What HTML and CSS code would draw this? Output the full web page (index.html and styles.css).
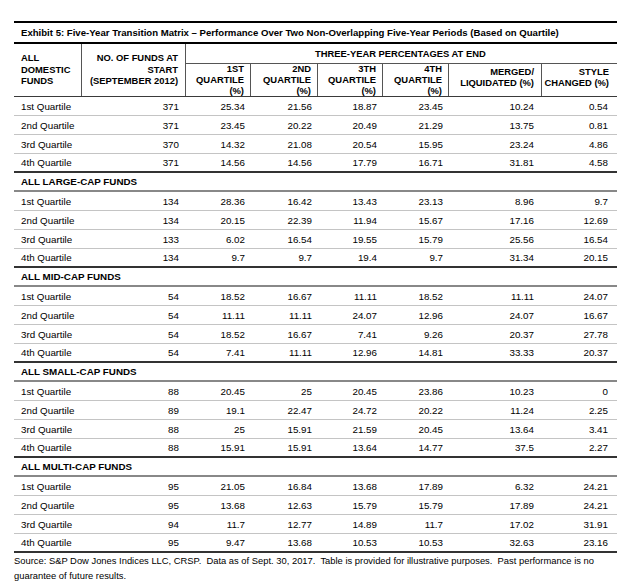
FILE: index.html
```html
<!DOCTYPE html>
<html lang="en">
<head>
<meta charset="utf-8">
<title>Exhibit 5: Five-Year Transition Matrix</title>
<link rel="stylesheet" href="styles.css">
</head>
<body>
<div class="exhibit">
  <div class="title">Exhibit 5: Five-Year Transition Matrix – Performance Over Two Non-Overlapping Five-Year Periods (Based on Quartile)</div>
  <div class="head">
    <div class="h-group">ALL<br>DOMESTIC<br>FUNDS</div>
    <div class="h-count">NO. OF FUNDS AT<br>START<br>(SEPTEMBER 2012)</div>
    <div class="h-span">THREE-YEAR PERCENTAGES AT END</div>
    <div class="h-sub">1ST<br>QUARTILE<br>(%)</div>
    <div class="h-sub">2ND<br>QUARTILE<br>(%)</div>
    <div class="h-sub">3TH<br>QUARTILE<br>(%)</div>
    <div class="h-sub">4TH<br>QUARTILE<br>(%)</div>
    <div class="h-sub h-two">MERGED/<br>LIQUIDATED (%)</div>
    <div class="h-sub h-two h-last">STYLE<br>CHANGED (%)</div>
  </div>

  <div class="row"><span class="lbl">1st Quartile</span><span>371</span><span>25.34</span><span>21.56</span><span>18.87</span><span>23.45</span><span>10.24</span><span>0.54</span></div>
  <div class="row"><span class="lbl">2nd Quartile</span><span>371</span><span>23.45</span><span>20.22</span><span>20.49</span><span>21.29</span><span>13.75</span><span>0.81</span></div>
  <div class="row"><span class="lbl">3rd Quartile</span><span>370</span><span>14.32</span><span>21.08</span><span>20.54</span><span>15.95</span><span>23.24</span><span>4.86</span></div>
  <div class="row end"><span class="lbl">4th Quartile</span><span>371</span><span>14.56</span><span>14.56</span><span>17.79</span><span>16.71</span><span>31.81</span><span>4.58</span></div>

  <div class="row section"><span class="lbl">ALL LARGE-CAP FUNDS</span></div>
  <div class="row"><span class="lbl">1st Quartile</span><span>134</span><span>28.36</span><span>16.42</span><span>13.43</span><span>23.13</span><span>8.96</span><span>9.7</span></div>
  <div class="row"><span class="lbl">2nd Quartile</span><span>134</span><span>20.15</span><span>22.39</span><span>11.94</span><span>15.67</span><span>17.16</span><span>12.69</span></div>
  <div class="row"><span class="lbl">3rd Quartile</span><span>133</span><span>6.02</span><span>16.54</span><span>19.55</span><span>15.79</span><span>25.56</span><span>16.54</span></div>
  <div class="row end"><span class="lbl">4th Quartile</span><span>134</span><span>9.7</span><span>9.7</span><span>19.4</span><span>9.7</span><span>31.34</span><span>20.15</span></div>

  <div class="row section"><span class="lbl">ALL MID-CAP FUNDS</span></div>
  <div class="row"><span class="lbl">1st Quartile</span><span>54</span><span>18.52</span><span>16.67</span><span>11.11</span><span>18.52</span><span>11.11</span><span>24.07</span></div>
  <div class="row"><span class="lbl">2nd Quartile</span><span>54</span><span>11.11</span><span>11.11</span><span>24.07</span><span>12.96</span><span>24.07</span><span>16.67</span></div>
  <div class="row"><span class="lbl">3rd Quartile</span><span>54</span><span>18.52</span><span>16.67</span><span>7.41</span><span>9.26</span><span>20.37</span><span>27.78</span></div>
  <div class="row end"><span class="lbl">4th Quartile</span><span>54</span><span>7.41</span><span>11.11</span><span>12.96</span><span>14.81</span><span>33.33</span><span>20.37</span></div>

  <div class="row section"><span class="lbl">ALL SMALL-CAP FUNDS</span></div>
  <div class="row"><span class="lbl">1st Quartile</span><span>88</span><span>20.45</span><span>25</span><span>20.45</span><span>23.86</span><span>10.23</span><span>0</span></div>
  <div class="row"><span class="lbl">2nd Quartile</span><span>89</span><span>19.1</span><span>22.47</span><span>24.72</span><span>20.22</span><span>11.24</span><span>2.25</span></div>
  <div class="row"><span class="lbl">3rd Quartile</span><span>88</span><span>25</span><span>15.91</span><span>21.59</span><span>20.45</span><span>13.64</span><span>3.41</span></div>
  <div class="row end"><span class="lbl">4th Quartile</span><span>88</span><span>15.91</span><span>15.91</span><span>13.64</span><span>14.77</span><span>37.5</span><span>2.27</span></div>

  <div class="row section"><span class="lbl">ALL MULTI-CAP FUNDS</span></div>
  <div class="row"><span class="lbl">1st Quartile</span><span>95</span><span>21.05</span><span>16.84</span><span>13.68</span><span>17.89</span><span>6.32</span><span>24.21</span></div>
  <div class="row"><span class="lbl">2nd Quartile</span><span>95</span><span>13.68</span><span>12.63</span><span>15.79</span><span>15.79</span><span>17.89</span><span>24.21</span></div>
  <div class="row"><span class="lbl">3rd Quartile</span><span>94</span><span>11.7</span><span>12.77</span><span>14.89</span><span>11.7</span><span>17.02</span><span>31.91</span></div>
  <div class="row end"><span class="lbl">4th Quartile</span><span>95</span><span>9.47</span><span>13.68</span><span>10.53</span><span>10.53</span><span>32.63</span><span>23.16</span></div>

  <p class="source">Source: S&amp;P Dow Jones Indices LLC, CRSP.&nbsp; Data as of Sept. 30, 2017.&nbsp; Table is provided for illustrative purposes.&nbsp; Past performance is no guarantee of future results.</p>
</div>
</body>
</html>
```
FILE: styles.css
```css
html, body {
  margin: 0;
  padding: 0;
  background: #ffffff;
}

body {
  font-family: "Liberation Sans", Arial, sans-serif;
  color: #000000;
}

.exhibit {
  width: 603px;
  padding: 21px 0 0 14px;
}

.title {
  box-sizing: border-box;
  height: 23px;
  border-top: 2px solid #000000;
  border-bottom: 2px solid #000000;
  padding-left: 7px;
  font-size: 9.6px;
  font-weight: bold;
  line-height: 20px;
  white-space: nowrap;
}

.head,
.row {
  display: grid;
  grid-template-columns: 68px 104px 65px 67px 65px 66px 93px 75px;
}

.head {
  box-sizing: border-box;
  height: 53px;
  grid-template-rows: 20px 32px;
  border-bottom: 1px solid #3a3a3a;
  font-size: 9.4px;
  font-weight: bold;
  line-height: 11.5px;
}

.h-group,
.h-count {
  grid-row: 1 / 3;
  display: flex;
  align-items: center;
  border-right: 1px solid #555555;
}

.h-group {
  padding-left: 7px;
  padding-bottom: 1px;
}

.h-count {
  justify-content: flex-end;
  text-align: right;
  padding-right: 7px;
  padding-bottom: 1px;
}

.h-span {
  grid-column: 3 / 9;
  border-bottom: 1px solid #555555;
  padding-left: 129px;
  line-height: 18px;
  padding-top: 1px;
}

.h-sub {
  text-align: right;
  padding-right: 6px;
  border-right: 1px solid #555555;
  line-height: 10.8px;
  padding-top: 0;
}

.h-two {
  padding-top: 3px;
  padding-right: 7px;
}

.h-last {
  border-right: none;
  padding-right: 8px;
}

.row {
  box-sizing: border-box;
  height: 19px;
  padding-top: 1px;
  border-bottom: 1px solid #c4c4c4;
  font-size: 9.8px;
  line-height: 17px;
}

.row span {
  text-align: right;
  padding-right: 7px;
}

.row span:nth-child(3) { padding-right: 6px; }
.row span:nth-child(4) { padding-right: 6px; }
.row span:nth-child(5) { padding-right: 6px; }
.row span:nth-child(6) { padding-right: 6px; }
.row span:nth-child(7) { padding-right: 8px; }
.row span:nth-child(8) { padding-right: 9px; }

.row .lbl {
  text-align: left;
  padding-left: 7px;
  padding-right: 0;
  white-space: nowrap;
}

.row.end {
  border-bottom: 2px solid #333333;
  line-height: 16px;
}

.row.section {
  border-bottom: 2px solid #888888;
  font-weight: bold;
  line-height: 16px;
}

.row.section .lbl {
  grid-column: 1 / 9;
}

.source {
  margin: 0;
  padding-top: 1px;
  font-size: 9.4px;
  line-height: 14.5px;
  width: 603px;
}
```
